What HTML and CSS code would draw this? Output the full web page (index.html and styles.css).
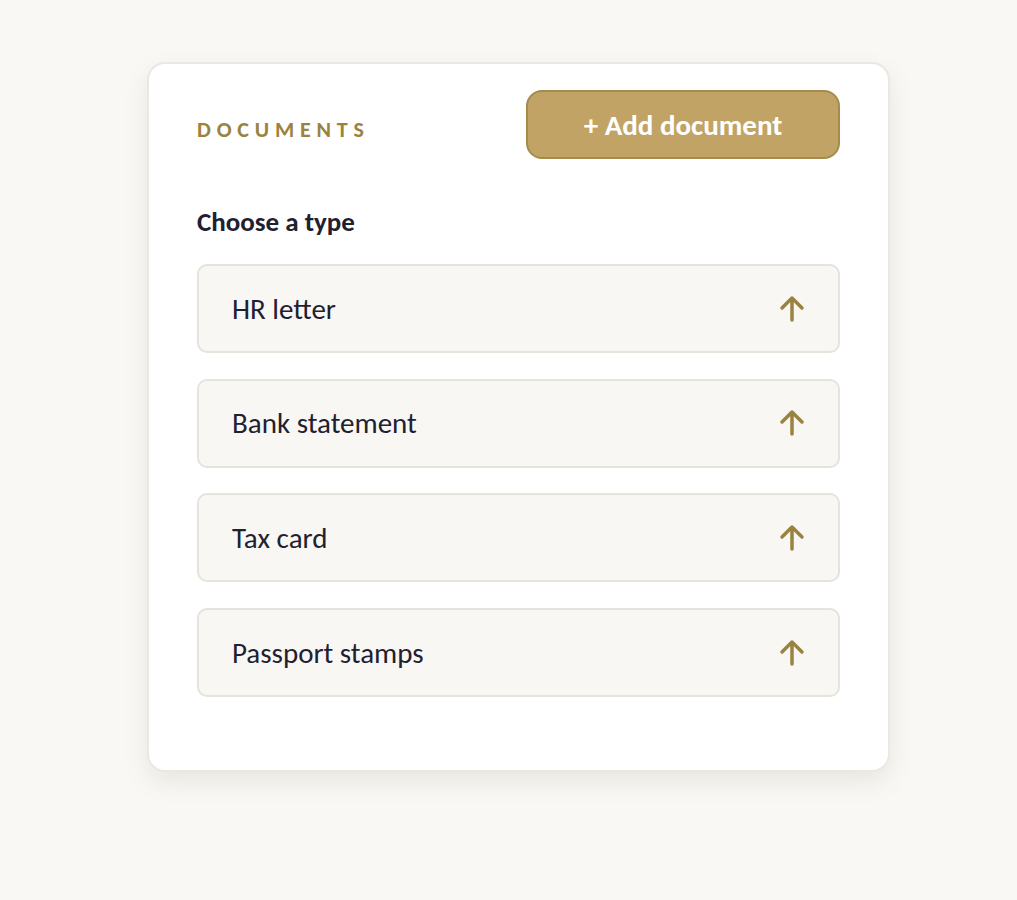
FILE: index.html
```html
<!DOCTYPE html>
<html lang="en">
<head>
    <meta charset="UTF-8">
    <meta name="viewport" content="width=device-width, initial-scale=1.0">
    <title>Documents</title>
    <link rel="stylesheet" href="styles.css">
</head>
<body>
    <div class="page">
        <div class="panel">
            <div class="panel-head">
                <div class="panel-title">Documents</div>
                <button class="add-btn">+ Add document</button>
            </div>
            <div class="choose">Choose a type</div>
            <div class="type-list">
                <div class="type-row">
                    <span class="type-name">HR letter</span>
                    <svg class="up" viewBox="0 0 26 28"><path d="M13 3v22M3 13l10-10 10 10" /></svg>
                </div>
                <div class="type-row">
                    <span class="type-name">Bank statement</span>
                    <svg class="up" viewBox="0 0 26 28"><path d="M13 3v22M3 13l10-10 10 10" /></svg>
                </div>
                <div class="type-row">
                    <span class="type-name">Tax card</span>
                    <svg class="up" viewBox="0 0 26 28"><path d="M13 3v22M3 13l10-10 10 10" /></svg>
                </div>
                <div class="type-row">
                    <span class="type-name">Passport stamps</span>
                    <svg class="up" viewBox="0 0 26 28"><path d="M13 3v22M3 13l10-10 10 10" /></svg>
                </div>
            </div>
        </div>
    </div>
</body>
</html>
```

FILE: styles.css
```css
body {
    margin: 0;
    background: #f9f8f5;
    font-family: "Carlito", "Calibri", "Lato", sans-serif;
    color: #1f2130;
}
.page {
    padding: 62px 0 100px 147px;
}
.panel {
    box-sizing: border-box;
    width: 743px;
    background: #fff;
    border: 2px solid #ebe8e1;
    border-radius: 18px;
    padding: 26px 48px 73px;
    box-shadow: 0 10px 24px rgba(120, 110, 80, 0.12);
}
.panel-head {
    display: flex;
    justify-content: space-between;
    align-items: center;
}
.panel-title {
    margin-top: 10px;
    color: #9a8340;
    font-size: 22px;
    font-weight: 700;
    letter-spacing: 5.8px;
    text-transform: uppercase;
}
.add-btn {
    box-sizing: border-box;
    width: 314px;
    height: 69px;
    background: #c1a465;
    border: 2px solid #a58c4d;
    border-radius: 16px;
    color: #fff;
    font-family: inherit;
    font-size: 29px;
    font-weight: 700;
    cursor: pointer;
}
.choose {
    margin-top: 46px;
    font-size: 27px;
    font-weight: 700;
}
.type-list {
    margin-top: 26px;
    display: flex;
    flex-direction: column;
    gap: 25.7px;
}
.type-row {
    box-sizing: border-box;
    height: 89px;
    display: flex;
    align-items: center;
    justify-content: space-between;
    padding: 0 33px;
    background: #f8f7f4;
    border: 2px solid #e6e3dc;
    border-radius: 10px;
}
.type-name {
    font-size: 29px;
}
.up {
    width: 26px;
    height: 28px;
    fill: none;
    stroke: #9a8340;
    stroke-width: 3.5;
    stroke-linecap: round;
    stroke-linejoin: round;
}
```
